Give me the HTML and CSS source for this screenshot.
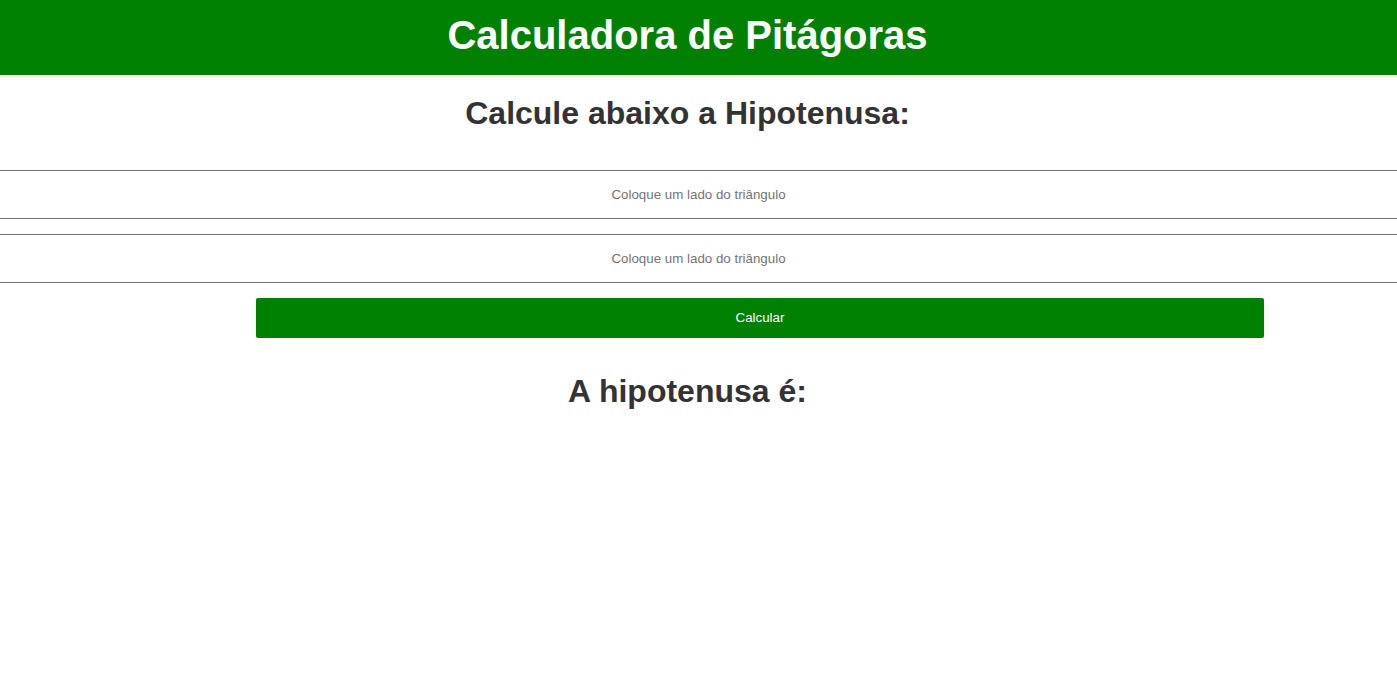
FILE: index.html
```html
<!DOCTYPE html>
<html lang="pt-BR">
<head>
<meta charset="utf-8">
<title>Calculadora de Pitágoras</title>
<link rel="stylesheet" href="styles.css">
</head>
<body>
<header class="topo">
  <h1 class="titulo">Calculadora de Pitágoras</h1>
</header>
<main class="conteudo">
  <h2 class="subtitulo">Calcule abaixo a Hipotenusa:</h2>
  <div class="campos">
    <input class="campo" type="text" placeholder="Coloque um lado do triângulo">
    <input class="campo" type="text" placeholder="Coloque um lado do triângulo">
  </div>
  <div class="linha-botao">
    <button class="botao" type="button">Calcular</button>
  </div>
  <h2 class="resultado">A hipotenusa é:</h2>
</main>
</body>
</html>
```

FILE: styles.css
```css
* { box-sizing: border-box; }
html, body { margin: 0; padding: 0; background: #fff; }
body { font-family: "Liberation Sans", Arial, sans-serif; }

.topo {
  background: #008000;
  height: 75px;
  display: flex;
  align-items: center;
  justify-content: center;
  padding: 0 22px 4px 0;
}
.titulo {
  margin: 0;
  color: #fff;
  font-size: 40px;
  font-weight: bold;
}

.conteudo {
  display: flex;
  flex-direction: column;
}
.subtitulo, .resultado {
  margin: 0;
  text-align: center;
  color: #333;
  font-size: 32px;
  font-weight: bold;
  padding-right: 22px;
}
.subtitulo { padding-top: 20px; height: 95px; }

.campos {
  display: flex;
  flex-direction: column;
  gap: 15px;
}
.campo {
  display: block;
  width: 100%;
  height: 49px;
  border: none;
  border-top: 1px solid #767676;
  border-bottom: 1px solid #767676;
  text-align: center;
  font-family: "Liberation Sans", Arial, sans-serif;
  font-size: 13.33px;
  outline: none;
}
.campo::placeholder { color: #757575; }

.linha-botao {
  display: flex;
  padding: 15px 0 0 256px;
}
.botao {
  width: 1008px;
  height: 40px;
  padding: 0 0 2px;
  background: #008000;
  color: #fff;
  border: none;
  border-radius: 2px;
  font-family: "Liberation Sans", Arial, sans-serif;
  font-size: 13.33px;
}

.resultado { padding-top: 35px; }
```
